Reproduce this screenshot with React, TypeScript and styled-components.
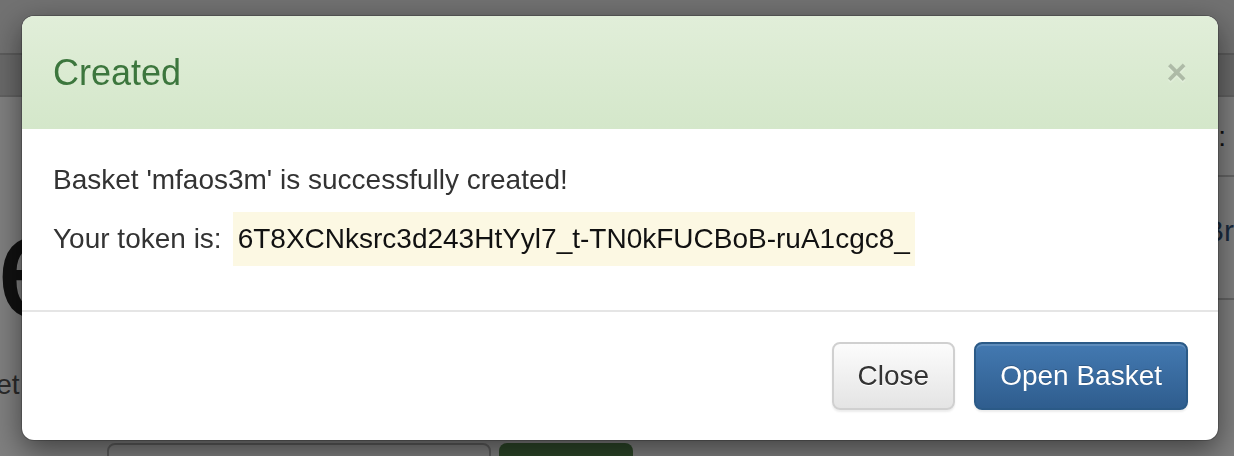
import React from "react";
import styled, { createGlobalStyle } from "styled-components";

const GlobalStyle = createGlobalStyle`
  html, body {
    margin: 0;
    padding: 0;
    width: 1234px;
    height: 456px;
    overflow: hidden;
    background: #ffffff;
    font-family: "Liberation Sans", Arial, Helvetica, sans-serif;
  }
  * { box-sizing: border-box; }
`;

/* ---------- page behind the modal ---------- */

const Page = styled.div`
  width: 1234px;
  height: 456px;
  overflow: hidden;
  display: flex;
  flex-direction: column;
`;

const NavBar = styled.div`
  height: 55px;
  flex: none;
  background: #e2e2e2;
  border-bottom: 2px solid #b8b8b8;
`;

const SubBar = styled.div`
  height: 42px;
  flex: none;
  background: #d2d2d2;
  border-bottom: 2px solid #c2c2c2;
`;

const Main = styled.div`
  flex: 1;
  display: flex;
  min-height: 0;
`;

const LeftCol = styled.div`
  width: 1100px;
  flex: none;
  display: flex;
  flex-direction: column;
`;

const Hero = styled.h1`
  margin: 94px 0 0 -112px;
  font-size: 150px;
  line-height: 1;
  font-weight: 400;
  color: #222;
  white-space: nowrap;
`;

const Lead = styled.p`
  margin: 24px 0 0 -66px;
  font-size: 28px;
  line-height: 40px;
  color: #555;
  white-space: nowrap;
`;

const FormRow = styled.div`
  margin-top: 38px;
  padding-left: 107px;
  display: flex;
  gap: 8px;
`;

const Input = styled.div`
  width: 384px;
  height: 70px;
  border: 2px solid #bbb;
  border-radius: 8px;
  background: #fff;
`;

const GoButton = styled.div`
  width: 134px;
  height: 70px;
  border-radius: 8px;
  background: linear-gradient(#5a8e52, #4e7f47);
`;

const RightCol = styled.div`
  width: 400px;
  flex: none;
  display: flex;
  flex-direction: column;
`;

const InfoRow = styled.div<{ $h: number; $pt: number }>`
  height: ${(p) => p.$h}px;
  padding-top: ${(p) => p.$pt}px;
  border-bottom: 2px solid #c8c8c8;
  display: flex;
`;

const InfoLabel = styled.div`
  width: 126px;
  text-align: right;
  font-size: 28px;
  line-height: 40px;
  color: #222;
`;

const InfoLink = styled.div`
  padding-left: 104px;
  font-size: 30px;
  line-height: 40px;
  color: #35567c;
  white-space: nowrap;
`;

/* ---------- modal ---------- */

const Backdrop = styled.div`
  position: fixed;
  inset: 0;
  background: rgba(0, 0, 0, 0.5);
  padding: 16px 0 0 22px;
`;

const Dialog = styled.div`
  width: 1196px;
  height: 424px;
  background: #fff;
  border-radius: 12px;
  overflow: hidden;
  box-shadow: 0 0 0 1px rgba(0, 0, 0, 0.2), 0 10px 30px rgba(0, 0, 0, 0.5);
  display: flex;
  flex-direction: column;
`;

const Header = styled.div`
  height: 113px;
  flex: none;
  padding: 0 31px 0 31px;
  display: flex;
  align-items: center;
  justify-content: space-between;
  background: linear-gradient(#e1eed9, #d4e7ca);
`;

const Title = styled.h4`
  margin: 0;
  font-size: 36px;
  line-height: 50px;
  font-weight: 400;
  color: #3c763d;
`;

const CloseX = styled.button`
  border: 0;
  background: transparent;
  padding: 0;
  margin: 0 0 2px 0;
  font-family: "Liberation Sans", Arial, sans-serif;
  font-size: 35px;
  font-weight: 700;
  line-height: 1;
  color: #000;
  opacity: 0.2;
  text-shadow: 0 2px 0 #fff;
  cursor: pointer;
`;

const Body = styled.div`
  height: 181px;
  flex: none;
  padding: 31px 31px 0 31px;
  font-size: 28px;
  line-height: 40px;
  color: #333;
`;

const Line = styled.p`
  margin: 0 0 12px 0;
`;

const TokenRow = styled.div`
  display: flex;
  align-items: center;
  gap: 11px;
`;

const Token = styled.span`
  display: inline-block;
  background: #fcf8e3;
  color: #111;
  padding: 7px 5px;
  line-height: 40px;
`;

const Footer = styled.div`
  flex: 1;
  border-top: 2px solid #e5e5e5;
  padding: 30px 30px 0 30px;
  display: flex;
  justify-content: flex-end;
  align-items: flex-start;
  gap: 19px;
`;

const Btn = styled.button<{ $primary?: boolean }>`
  height: 68px;
  padding: 0 24px;
  font-family: "Liberation Sans", Arial, sans-serif;
  font-size: 28px;
  line-height: 40px;
  border-radius: 8px;
  border: 2px solid ${(p) => (p.$primary ? "#2b5a87" : "#d0d0d0")};
  color: ${(p) => (p.$primary ? "#fff" : "#333")};
  background: ${(p) =>
    p.$primary
      ? "linear-gradient(#4379b1, #2f5d8e)"
      : "linear-gradient(#fcfcfc, #e4e4e4)"};
  text-shadow: ${(p) => (p.$primary ? "0 -1px 0 rgba(0,0,0,0.2)" : "0 1px 0 #fff")};
  box-shadow: inset 0 2px 0 rgba(255, 255, 255, 0.15), 0 2px 2px rgba(0, 0, 0, 0.075);
  cursor: pointer;
`;

export default function App() {
  return (
    <>
      <GlobalStyle />
      <Page>
        <NavBar />
        <SubBar />
        <Main>
          <LeftCol>
            <Hero>Request Baskets</Hero>
            <Lead>Basket name</Lead>
            <FormRow>
              <Input />
              <GoButton />
            </FormRow>
          </LeftCol>
          <RightCol>
            <InfoRow $h={80} $pt={20}>
              <InfoLabel>Token:</InfoLabel>
            </InfoRow>
            <InfoRow $h={123} $pt={34}>
              <InfoLink>Browse requests</InfoLink>
            </InfoRow>
          </RightCol>
        </Main>
      </Page>
      <Backdrop>
        <Dialog>
          <Header>
            <Title>Created</Title>
            <CloseX aria-label="Close">×</CloseX>
          </Header>
          <Body>
            <Line>Basket 'mfaos3m' is successfully created!</Line>
            <TokenRow>
              <span>Your token is:</span>
              <Token>6T8XCNksrc3d243HtYyl7_t-TN0kFUCBoB-ruA1cgc8_</Token>
            </TokenRow>
          </Body>
          <Footer>
            <Btn>Close</Btn>
            <Btn $primary>Open Basket</Btn>
          </Footer>
        </Dialog>
      </Backdrop>
    </>
  );
}
